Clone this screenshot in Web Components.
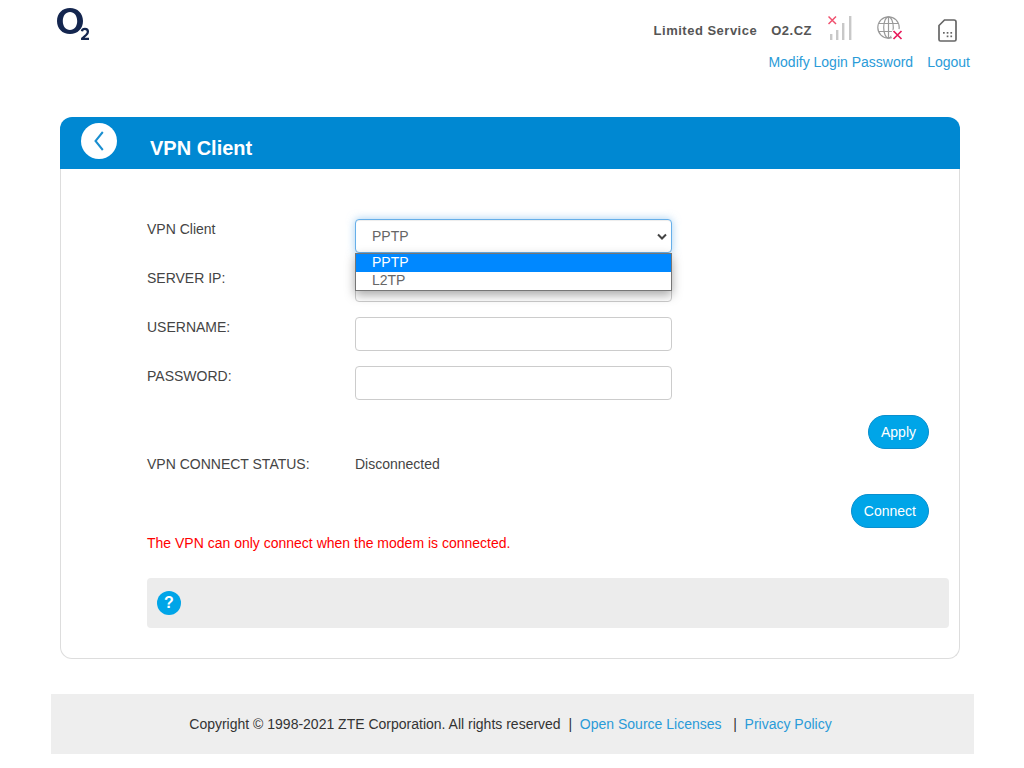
<!DOCTYPE html>
<html>
<head>
<meta charset="utf-8">
<title>VPN Client</title>
<style>
  html, body { margin: 0; background: #fff; }
  body { font-family: "Liberation Sans", Arial, sans-serif; font-size: 14px; color: #444; }
</style>
</head>
<body>
<o2-page>
  <o2-header></o2-header>
  <vpn-card title-text="VPN Client">
    <form-row label="VPN Client"><vpn-select value="PPTP" open></vpn-select></form-row>
    <form-row label="SERVER IP:"><vpn-input></vpn-input></form-row>
    <form-row label="USERNAME:"><vpn-input></vpn-input></form-row>
    <form-row label="PASSWORD:"><vpn-input></vpn-input></form-row>
    <button-row top="15"><vpn-button>Apply</vpn-button></button-row>
    <status-row label="VPN CONNECT STATUS:">Disconnected</status-row>
    <button-row top="35"><vpn-button>Connect</vpn-button></button-row>
    <warn-text>The VPN can only connect when the modem is connected.</warn-text>
    <help-box></help-box>
  </vpn-card>
  <o2-footer></o2-footer>
</o2-page>

<script>
// Small helper so each component just declares its html
const define = function (name, html, Base = HTMLElement) {
  const template = document.createElement('template');
  template.innerHTML = html;
  customElements.define(name, class extends Base {
    constructor() {
      super();
      this.attachShadow({ mode: 'open' });
      this.shadowRoot.appendChild(template.content.cloneNode(true));
      if (this.setup) this.setup();
    }
  });
};

define('o2-page', `
<style>
  :host { display: block; width: 1024px; height: 768px; overflow: hidden; }
</style>
<slot></slot>`);

define('o2-header', `
<style>
  :host { display: block; height: 117px; position: relative; box-sizing: border-box; padding: 0 54px 0 57px; }
  .bar { display: flex; justify-content: space-between; align-items: flex-start; }
  .logo { display: block; margin-top: 8px; }
  .right { display: flex; flex-direction: column; align-items: flex-end; padding-top: 14px; }
  .status { display: flex; align-items: center; height: 32px; color: #555; font-size: 13px; font-weight: 700; letter-spacing: .5px; }
  .status svg { display: block; flex: none; }
  .links { display: flex; gap: 14px; height: 32px; align-items: center; color: #2a9bd8; font-size: 14px; }
</style>
<div class="bar">
  <svg class="logo" width="33" height="33" viewBox="0 0 33 33">
    <path fill-rule="evenodd" fill="#14264f" d="M13 0C5.300 0 0 5.400 0 13s5.300 13 13 13 13-5.400 13-13S20.700 0 13 0zm0 4c4.300 0 7.200 3.800 7.200 9s-2.900 9-7.200 9-7.200-3.800-7.200-9 2.900-9 7.200-9z"/>
    <path fill="none" stroke="#14264f" stroke-width="2.300" d="M24.900 23.200c.3-1.500 1.500-2.300 3-2.300 1.800 0 3 1.100 3 2.800 0 1.300-.7 2.200-1.800 3.300L25.200 30.400v.5H32"/>
  </svg>
  <div class="right">
    <div class="status">
      <span style="margin-right:14px">Limited Service</span>
      <span style="margin-right:16px">O2.CZ</span>
      <svg width="26" height="26" viewBox="0 0 26 26" style="margin:0 23px 4px 0">
        <g fill="#c8c8c8"><rect x="2" y="19" width="2.400" height="6"/><rect x="8" y="15" width="2.400" height="10"/><rect x="14" y="8" width="2.400" height="17"/><rect x="21" y="1" width="2.400" height="24"/></g>
        <path d="M0.500 1.500l7.500 7.500M8 1.500l-7.500 7.500" stroke="#f0506e" stroke-width="1.500" fill="none"/>
      </svg>
      <svg width="26" height="25" viewBox="0 0 26 25" style="margin:0 35px 4px 0">
        <g fill="none" stroke="#9a9a9a" stroke-width="1.200">
          <circle cx="11.500" cy="11.500" r="10.700"/><ellipse cx="11.500" cy="11.500" rx="4.800" ry="10.700"/><path d="M11.500 .8v21.400M1.800 7.500h19.400M1.800 15.500h19.400"/>
        </g>
        <circle cx="20" cy="18.500" r="6" fill="#fff"/>
        <path d="M16.500 15l8 8M24.500 15l-8 8" stroke="#e8195a" stroke-width="1.700" fill="none"/>
      </svg>
      <svg width="19" height="23" viewBox="0 0 19 23" style="margin-right:13px">
        <path d="M6.500 1h9.500A2 2 0 0 1 18 3v17.500a1.500 1.500 0 0 1-1.500 1.500h-14A1.500 1.500 0 0 1 1 20.500V6.500z" fill="none" stroke="#666" stroke-width="1.700"/>
        <g fill="#666"><rect x="5" y="13" width="1.700" height="1.700"/><rect x="8.700" y="13" width="1.700" height="1.700"/><rect x="12.400" y="13" width="1.700" height="1.700"/><rect x="8.700" y="16.500" width="1.700" height="1.700"/><rect x="12.400" y="16.500" width="1.700" height="1.700"/></g>
      </svg>
    </div>
    <div class="links"><span>Modify Login Password</span><span>Logout</span></div>
  </div>
</div>`);

define('vpn-card', `
<style>
  :host { display: block; width: 900px; margin-left: 60px; box-sizing: border-box; }
  .head { display: flex; align-items: flex-start; height: 52px; background: #0088d2; border-radius: 12px 12px 0 0; padding: 6px 0 0 21px; box-sizing: border-box; }
  .back { width: 36px; height: 36px; border-radius: 50%; background: #fff; display: flex; align-items: center; justify-content: center; }
  h1 { margin: 14px 0 0 33px; font-size: 20px; line-height: 23px; font-weight: 700; color: #fff; }
  .body { border: 1px solid #ddd; border-top: 0; border-radius: 0 0 12px 12px; height: 490px; box-sizing: border-box; padding: 50px 10px 0 86px; }
</style>
<div class="head">
  <div class="back"><svg width="12" height="20" viewBox="0 0 12 20"><path d="M9.800 1L2.500 10l7.300 9" fill="none" stroke="#1a8fd0" stroke-width="2"/></svg></div>
  <h1 id="t"></h1>
</div>
<div class="body"><slot></slot></div>`, class extends HTMLElement {
  setup() { this.shadowRoot.getElementById('t').textContent = this.getAttribute('title-text'); }
});

define('form-row', `
<style>
  :host { display: flex; height: 34px; margin-bottom: 15px; font-size: 14px; color: #444; }
  label { width: 208px; flex: none; padding-top: 2px; }
</style>
<label id="l"></label><slot></slot>`, class extends HTMLElement {
  setup() { this.shadowRoot.getElementById('l').textContent = this.getAttribute('label'); }
});

define('vpn-input', `
<style>
  :host { display: block; width: 317px; height: 34px; box-sizing: border-box; border: 1px solid #ccc; border-radius: 4px; background: #fff; }
</style>`);

define('vpn-select', `
<style>
  :host { display: block; width: 317px; height: 34px; position: relative; box-sizing: border-box; border: 1px solid #66afe9; border-radius: 4px; background: #fff;
    box-shadow: 0 0 8px rgba(102,175,233,.6), inset 0 1px 1px rgba(0,0,0,.075); font-size: 14px; color: #666; }
  .value { display: block; padding: 8px 0 0 16px; }
  svg { position: absolute; right: 4px; top: 13px; }
  .menu { position: absolute; left: -1px; top: 33px; width: 317px; box-sizing: border-box; border: 1px solid #767676; background: #fff; box-shadow: 0 4px 10px rgba(0,0,0,.35); z-index: 5; }
  .opt { height: 18px; line-height: 16px; padding-left: 16px; }
  .opt.on { background: #0088ff; color: #fff; }
</style>
<span class="value" id="v"></span>
<svg width="10" height="8" viewBox="0 0 10 8"><path d="M1 1.500l4 4 4-4" fill="none" stroke="#444" stroke-width="2"/></svg>
<div class="menu"><div class="opt on">PPTP</div><div class="opt">L2TP</div></div>`, class extends HTMLElement {
  setup() { this.shadowRoot.getElementById('v').textContent = this.getAttribute('value'); }
});

define('button-row', `
<style>
  :host { display: flex; justify-content: flex-end; padding-right: 20px; }
</style>
<slot></slot>`, class extends HTMLElement {
  setup() { this.style.marginTop = (this.getAttribute('top') - 15) + 'px'; }
});

define('vpn-button', `
<style>
  :host { display: flex; align-items: center; height: 34px; padding: 0 12px; box-sizing: border-box; border-radius: 17px; background: #00a5e8; border: 1px solid #0a8fce; color: #fff; font-size: 14px; }
</style>
<slot></slot>`);

define('status-row', `
<style>
  :host { display: flex; height: 18px; margin-top: 7px; font-size: 14px; color: #444; line-height: 16px; }
  label { width: 208px; flex: none; }
</style>
<label id="l"></label><slot></slot>`, class extends HTMLElement {
  setup() { this.shadowRoot.getElementById('l').textContent = this.getAttribute('label'); }
});

define('warn-text', `
<style>
  :host { display: block; margin-top: 7px; height: 18px; line-height: 16px; color: #f00; font-size: 14px; }
</style>
<slot></slot>`);

define('help-box', `
<style>
  :host { display: flex; align-items: center; margin-top: 25px; height: 50px; padding-left: 10px; background: #ececec; border-radius: 4px; }
  .q { width: 24px; height: 24px; border-radius: 50%; background: #00a5e8; color: #fff; font-size: 16px; font-weight: 700; display: flex; align-items: center; justify-content: center; }
</style>
<div class="q">?</div>`);

define('o2-footer', `
<style>
  :host { display: flex; align-items: center; justify-content: center; margin: 35px 0 0 51px; width: 923px; height: 60px; box-sizing: border-box; padding-right: 4px; background: #eee; font-size: 14px; color: #333; white-space: pre; }
  a { color: #2a9bd8; }
</style>
<span>Copyright © 1998-2021 ZTE Corporation. All rights reserved  |  <a>Open Source Licenses</a>   |  <a>Privacy Policy</a></span>`);
</script>
</body>
</html>
